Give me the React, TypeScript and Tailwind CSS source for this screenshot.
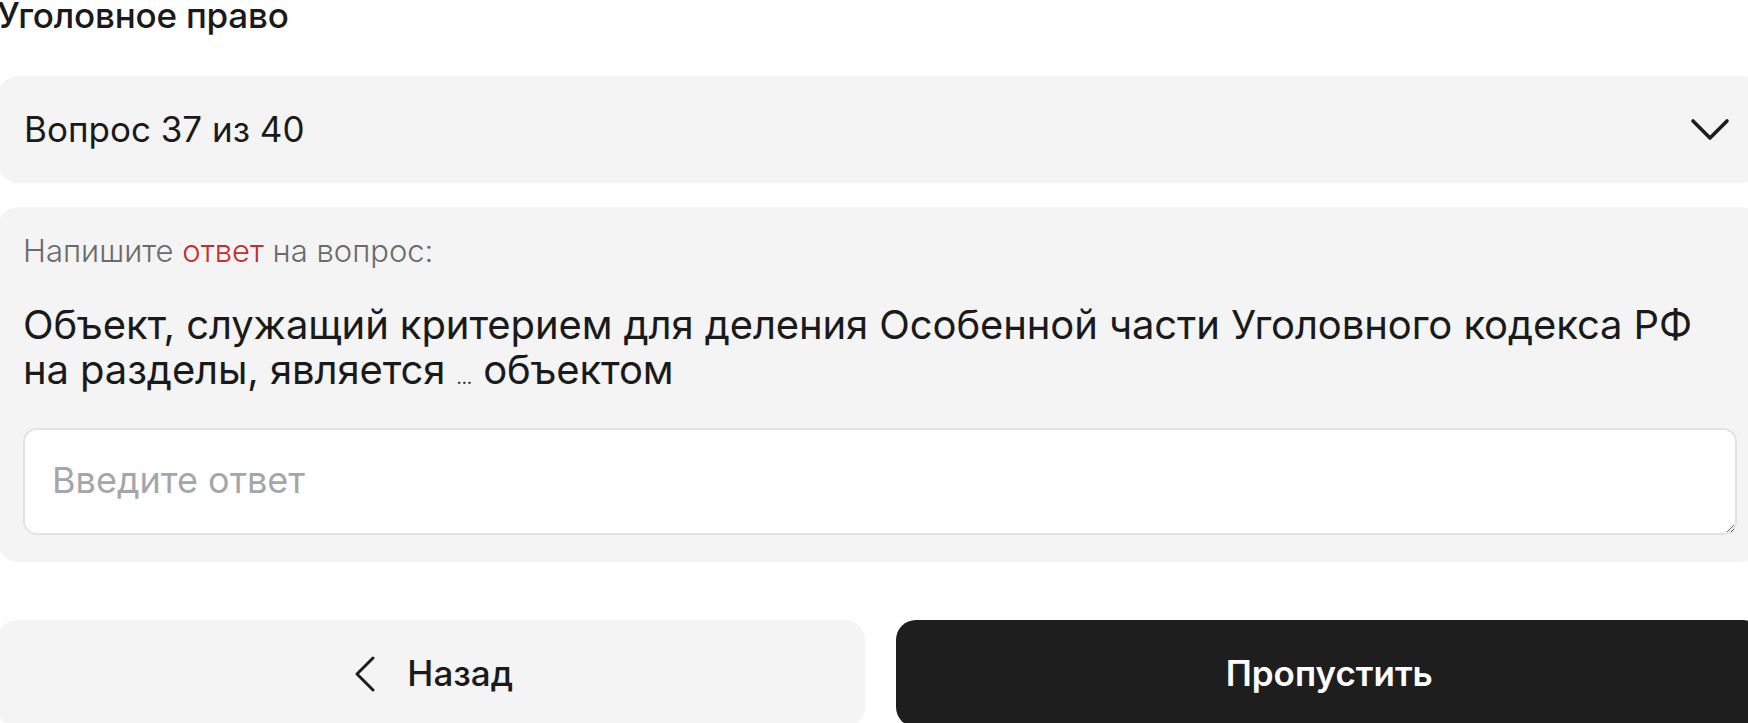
import React from "react";

const font = { fontFamily: "Inter, 'Noto Sans', sans-serif" };

const ChevronDown = () => (
  <svg width="40" height="24" viewBox="0 0 40 24" fill="none">
    <path d="M3 3L20 20L37 3" stroke="#1c1c1c" strokeWidth="3.6" strokeLinecap="round" strokeLinejoin="round" />
  </svg>
);

const ChevronLeft = () => (
  <svg width="22" height="36" viewBox="0 0 22 36" fill="none">
    <path d="M19 2L3 18L19 34" stroke="#1c1c1c" strokeWidth="3" strokeLinecap="round" strokeLinejoin="round" />
  </svg>
);

export default function App() {
  return (
    <div className="min-h-screen w-full bg-white overflow-hidden" style={font}>
      <div className="-ml-[3px] w-[1766px] flex flex-col">
        {/* Title */}
        <h1 className="-mt-[4px] text-[35px] leading-[38px] font-medium text-[#1a1a1a] tracking-[-0.2px]">
          Уголовное право
        </h1>

        {/* Question selector */}
        <button
          type="button"
          className="mt-[42px] h-[107px] w-full rounded-[22px] bg-[#f4f4f4] pl-[27px] pr-[33px] flex items-center justify-between"
        >
          <span className="text-[35px] text-[#1a1a1a]">Вопрос 37 из 40</span>
          <ChevronDown />
        </button>

        {/* Question card */}
        <div className="mt-[24px] rounded-[22px] bg-[#f4f4f4] px-[26px] pt-[26px] pb-[27px] flex flex-col">
          <p className="text-[31px] leading-[36px] font-light text-[#6b6b6b]">
            Напишите <span className="text-[#c62d2d]">ответ</span> на вопрос:
          </p>
          <p className="mt-[33px] text-[40px] leading-[45px] text-[#1a1a1a] tracking-[-0.1px]">
            Объект, служащий критерием для деления Особенной части Уголовного кодекса РФ
            <br />
            на разделы, является <span className="text-[18px] leading-none">…</span> объектом
          </p>
          <textarea
            placeholder="Введите ответ"
            className="mt-[36px] h-[107px] w-full rounded-[14px] border-2 border-[#e3e3e3] bg-white pl-[27px] pt-[29px] text-[36px] leading-[42px] text-[#1a1a1a] placeholder:text-[#a3a6aa] outline-none"
          />
        </div>

        {/* Actions */}
        <div className="mt-[58px] grid grid-cols-2 gap-[31px]">
          <button
            type="button"
            className="h-[107px] rounded-[20px] bg-[#f4f4f4] pl-[6px] flex items-center justify-center gap-[31px] text-[35px] font-medium text-[#1a1a1a]"
          >
            <ChevronLeft />
            <span>Назад</span>
          </button>
          <button
            type="button"
            className="h-[107px] rounded-[20px] bg-[#1e1e1e] flex items-center justify-center text-[35px] font-semibold text-white"
          >
            Пропустить
          </button>
        </div>
      </div>
    </div>
  );
}
